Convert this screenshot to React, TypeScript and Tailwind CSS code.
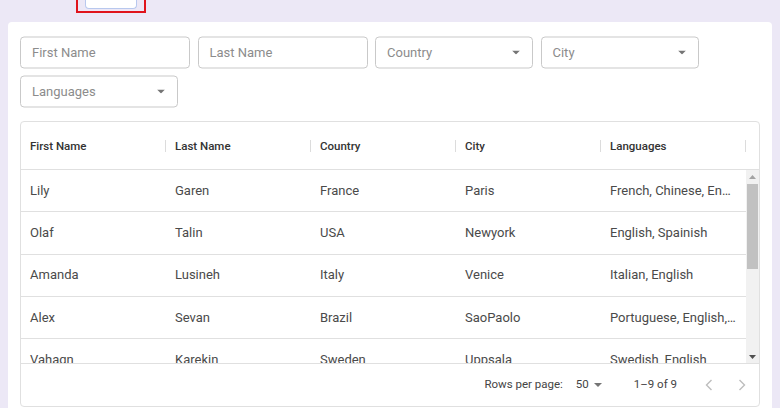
import React from "react";

const cols = ["First Name", "Last Name", "Country", "City", "Languages"];
const rows = [
  ["Lily", "Garen", "France", "Paris", "French, Chinese, English"],
  ["Olaf", "Talin", "USA", "Newyork", "English, Spainish"],
  ["Amanda", "Lusineh", "Italy", "Venice", "Italian, English"],
  ["Alex", "Sevan", "Brazil", "SaoPaolo", "Portuguese, English, Spanish"],
  ["Vahagn", "Karekin", "Sweden", "Uppsala", "Swedish, English"],
];

function Caret({ className = "" }: { className?: string }) {
  return (
    <svg width="8" height="4" viewBox="0 0 8 4" className={className}>
      <path d="M0 0 L8 0 L4 4 Z" fill="#757575" />
    </svg>
  );
}

function TextBox({ label }: { label: string }) {
  return (
    <div className="w-[170px] h-[32px] border border-[#c9c9c9] rounded-[4px] flex items-center px-[11px] text-[13px] text-[#8c8c8c]">
      {label}
    </div>
  );
}

function SelectBox({ label }: { label: string }) {
  return (
    <div className="w-[158px] h-[32px] border border-[#c9c9c9] rounded-[4px] flex items-center justify-between pl-[11px] pr-[12px] text-[13px] text-[#8c8c8c]">
      <span>{label}</span>
      <Caret />
    </div>
  );
}

export default function App() {
  return (
    <div className="h-[408px] w-[780px] overflow-hidden bg-[#ece8f6] font-['Roboto',sans-serif]">
      <div className="h-[22px]">
        <div className="ml-[76px] w-[70px] h-[13px] border-x-2 border-b-2 border-[#e0141c]">
          <div className="ml-[7px] w-[52px] h-[9px] bg-white border border-t-0 border-[#b8c8ee] rounded-b-[4px]" />
        </div>
      </div>
      <div className="ml-[8px] w-[764px] h-[400px] bg-white rounded-t-[4px] px-3 pt-[14px]">
        <div className="flex flex-wrap gap-x-[7.5px] gap-y-[7px] w-[700px] translate-y-[0.5px]">
          <TextBox label="First Name" />
          <TextBox label="Last Name" />
          <SelectBox label="Country" />
          <SelectBox label="City" />
          <SelectBox label="Languages" />
        </div>
        <div className="mt-[14px] border border-[#e0e0e0] rounded-[4px] flex flex-col">
          <div className="h-[48px] flex border-b border-[#e0e0e0]">
            {cols.map((c) => (
              <div key={c} className="w-[145px] flex items-center">
                <div className="flex-1 pl-[9px] pt-[2px] text-[11.5px] font-medium text-[#333]">{c}</div>
                <div className="w-px h-[12px] bg-[#dcdcdc]" />
              </div>
            ))}
          </div>
          <div className="flex h-[193px]">
            <div className="w-[725px] overflow-hidden">
              {rows.map((r, i) => (
                <div key={i} className="h-[42.3px] box-border flex items-center border-b border-[#e0e0e0]">
                  {r.map((v, j) => (
                    <div key={j} className="w-[145px] pl-[9px] pr-[10px] text-[13px] text-[#4a4a4a] whitespace-nowrap overflow-hidden text-ellipsis">
                      {v}
                    </div>
                  ))}
                </div>
              ))}
            </div>
            <div className="w-[13px] bg-[#f1f1f1] flex flex-col items-center">
              <div className="h-[13px] flex items-center justify-center">
                <svg width="7" height="4" viewBox="0 0 7 4"><path d="M0 4 L7 4 L3.5 0 Z" fill="#a3a3a3" /></svg>
              </div>
              <div className="w-[11px] h-[85px] bg-[#c1c1c1] mt-[1px]" />
              <div className="flex-1" />
              <div className="h-[13px] flex items-center justify-center">
                <svg width="7" height="4" viewBox="0 0 7 4"><path d="M0 0 L7 0 L3.5 4 Z" fill="#505050" /></svg>
              </div>
            </div>
          </div>
          <div className="h-[43px] border-t border-[#e0e0e0] flex items-center justify-end pr-[5px] text-[11.5px] text-[#444]">
            <span>Rows per page:</span>
            <span className="ml-[13px]">50</span>
            <Caret className="ml-[5px]" />
            <span className="ml-[32px]">1–9 of 9</span>
            <div className="ml-[20px] w-[24px] flex justify-center">
              <svg width="8" height="12" viewBox="0 0 8 12"><path d="M6.5 1 L1.5 6 L6.5 11" fill="none" stroke="#bdbdbd" strokeWidth="1.4" /></svg>
            </div>
            <div className="ml-[9px] w-[24px] flex justify-center">
              <svg width="8" height="12" viewBox="0 0 8 12"><path d="M1.5 1 L6.5 6 L1.5 11" fill="none" stroke="#bdbdbd" strokeWidth="1.4" /></svg>
            </div>
          </div>
        </div>
      </div>
    </div>
  );
}
